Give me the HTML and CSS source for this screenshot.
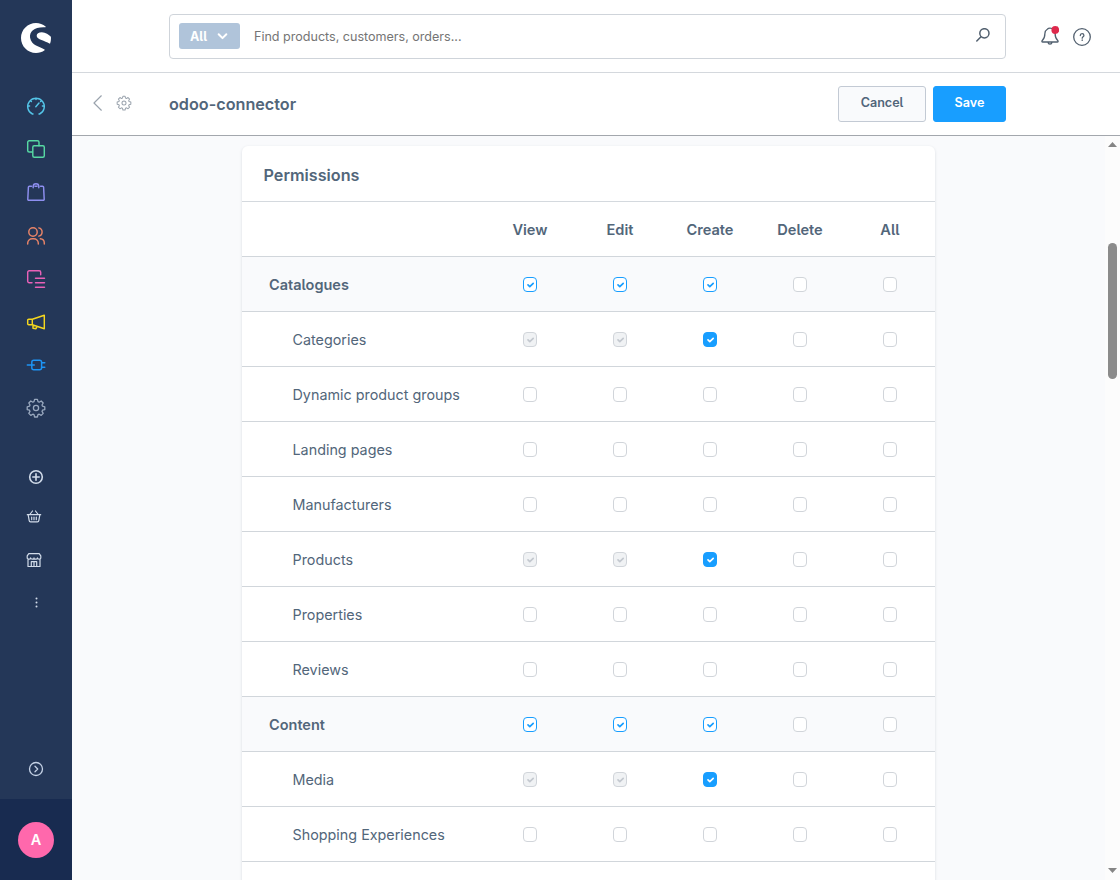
FILE: index.html
```html
<!DOCTYPE html>
<html lang="en">
<head>
<meta charset="utf-8">
<title>odoo-connector</title>
<link rel="stylesheet" href="styles.css">
</head>
<body>
<svg class="defs" width="0" height="0">
  <symbol id="check" viewBox="0 0 12 13"><path d="M4 6.900l1.800 1.700L9.200 5.300"/></symbol>
  <symbol id="gear" viewBox="0 .4 18 18"><path d="M7.600.8h2.800l.6 2.300 1.200.5 2-1.200 2 2-1.200 2 .5 1.200 2.300.6v2.800l-2.300.6-.5 1.200 1.200 2-2 2-2-1.200-1.200.5-.6 2.300H7.600L7 16.100l-1.200-.5-2 1.200-2-2 1.200-2-.5-1.200L.2 11V8.200L2.500 7.600 3 6.400l-1.200-2 2-2 2 1.200L7 3.100z"/><circle cx="9" cy="9.400" r="2.600"/></symbol>
</svg>
<div class="app">
  <aside class="sidebar">
    <svg class="logo" viewBox="0 0 30 30"><path d="M24.600 3.600C21.900 1.300 18.600 0 15 0 6.700 0 0 6.700 0 15s6.700 15 15 15c3.200 0 6.200-1 8.600-2.700.3-.3.200-.6-.1-.8C19 23.800 10.200 22.500 9.100 14.800 8.300 8.300 13.500 3.700 24.200 4.300c.5 0 .7-.4.4-.7z"/><path d="M29.900 13.800c-2-2-5.300-4.500-9.100-4.500-3.300 0-5.200 1.500-5.100 3.600.1 3.800 8.400 4.500 12.700 7.700.3.200.7.100.8-.3.700-2.100.9-4.300.7-6.500z"/></svg>
    <nav class="main-nav">
      <svg class="c-cyan" viewBox="0 0 18 18"><path d="M6 17H5.400A8.300 8.300 0 1 1 12.600 17H12M8.800 9.800L12 6M1 9h1.600M15.400 9H17M9 1v1.500M3.400 3.400l1 1M14.600 3.400l-1 1"/></svg>
      <svg class="c-green" viewBox="0 0 18 18"><path d="M5.300 12H2.200A1.500 1.500 0 0 1 .7 10.500V2.200A1.500 1.500 0 0 1 2.200.7h8.300A1.500 1.500 0 0 1 12 2.200v3.500"/><rect x="5.800" y="5.800" width="11.500" height="11.500" rx="1.500"/></svg>
      <svg class="c-purple" viewBox="0 0 18 18"><path d="M4.500 3.200H2.400a1 1 0 0 0-1 .9L.8 16.200a1 1 0 0 0 1 1.100h14.400a1 1 0 0 0 1-1.100l-.6-12.100a1 1 0 0 0-1-.9h-2.100M8 3.200h2M6.200 4.700V3.500C6.200-.1 11.800-.1 11.800 3.500v1.200"/></svg>
      <svg class="c-orange" viewBox="0 0 18 18"><circle cx="6" cy="5" r="4.200"/><path d="M.7 17v-1a4.500 4.500 0 0 1 4.500-4.200h1.600A4.500 4.500 0 0 1 11.300 16v1M11.800.9a4.200 4.200 0 0 1 0 8.200M13.300 11.800c2.500.2 4 1.800 4 4.200v1"/></svg>
      <svg class="c-pink" viewBox="0 0 18 18"><path d="M5 12.800H2.200A1.500 1.500 0 0 1 .7 11.300V2.200A1.500 1.500 0 0 1 2.200.7h10A1.500 1.500 0 0 1 13.700 2.200v2.500M8.500 8.300h9M8.500 12.800h9M8.500 17.200h9"/></svg>
      <svg class="c-yellow" viewBox="0 0 18 18"><path d="M1.700 6.300h3.600v5.400H1.700a1 1 0 0 1-1-1V7.300a1 1 0 0 1 1-1zM5.300 6.300l12-4v13.400l-12-4M6 12v3.200l3 .5.900-2.400"/></svg>
      <svg class="c-blue" viewBox="0 0 18 18"><rect x="4.800" y="4.200" width="9.800" height="9.600" rx="2"/><path d="M.3 9h7M14.600 6.800h3.200M14.600 11.200h3.200"/></svg>
      <svg class="c-gray" viewBox="0 0 18 18"><use href="#gear"/></svg>
    </nav>
    <nav class="sub-nav">
      <svg class="plus" viewBox="0 0 18 18"><circle cx="9" cy="9" r="6.300"/><path d="M9 5.800v6.400M5.800 9h6.400"/></svg>
      <svg class="shift" viewBox="0 0 18 18"><path d="M2.300 6.700h13.400M3.200 7l1 5.600c.1.800.6 1.200 1.300 1.200h7c.7 0 1.200-.4 1.300-1.200l1-5.600M4.800 6.500L7.500 3M13.200 6.500L10.500 3M6.700 9v2.700M9 9v2.700M11.300 9v2.700"/></svg>
      <svg class="shift" viewBox="0 0 18 18"><path d="M3 8.500v7h12v-7M3.800 2.600h10.400l1.600 2.300v2c0 1.700-3.400 1.700-3.400 0 0 1.700-3.400 1.700-3.400 0 0 1.700-3.400 1.700-3.400 0 0 1.700-3.400 1.700-3.400 0v-2zM6.300 15.500v-4.800h5.400v4.800M9 10.700v4.800"/></svg>
      <svg class="dots" viewBox="0 0 18 18"><circle cx="9.500" cy="4.600" r="1"/><circle cx="9.500" cy="8.500" r="1"/><circle cx="9.500" cy="12.400" r="1"/></svg>
    </nav>
    <svg class="expand" viewBox="0 0 18 18"><circle cx="9" cy="9" r="6.500"/><path d="M8 6.300L10.700 9 8 11.700"/></svg>
    <div class="user"><span class="avatar">A</span></div>
  </aside>
  <div class="page">
    <header class="topbar">
      <div class="search">
        <button class="scope">All <svg viewBox="0 0 10 8"><path d="M1.500 2l3.500 3.500L8.500 2"/></svg></button>
        <span class="placeholder">Find products, customers, orders...</span>
        <svg class="lens" viewBox="0 0 14 14"><circle cx="8.400" cy="5.300" r="4.600"/><path d="M5 8.700L.8 13"/></svg>
      </div>
      <div class="actions">
        <svg class="bell" viewBox="0 0 18 20"><path d="M6.300 3.200C4.600 4.200 3.900 5.500 3.900 7.500c0 3.500-.5 5-2.600 7-.7.700-.5 1.500.4 1.500h14.600c.9 0 1.100-.8.400-1.500-2.100-2-2.600-3.500-2.600-7 0-3-2.100-5.300-5.100-5.300-1 0-2 .3-2.700 1zM7 16.300c.3 2.300 3.700 2.300 4 0"/><circle class="alert" cx="14.300" cy="4" r="3.900"/></svg>
        <svg class="help" viewBox="0 0 18 18"><circle cx="9" cy="9" r="8.300"/><path d="M7.300 7.500C7.300 5 10.900 5.100 10.900 7.400 10.900 8.800 9.200 8.800 9.200 10.200M9.200 12v.4"/></svg>
      </div>
    </header>
    <header class="smartbar">
      <svg class="back" viewBox="0 0 9 16"><path d="M8.300.800L1 8l7.300 7.200"/></svg>
      <svg class="cog" viewBox="0 0 18 18"><use href="#gear"/></svg>
      <h1>odoo-connector</h1>
      <button class="btn cancel">Cancel</button>
      <button class="btn save">Save</button>
    </header>
    <main class="content">
      <section class="card">
        <h2>Permissions</h2>
        <div class="row head"><span></span><b>View</b><b>Edit</b><b>Create</b><b>Delete</b><b>All</b></div>
        <div class="row group"><span>Catalogues</span><svg class="cb some"><use href="#check"/></svg><svg class="cb some"><use href="#check"/></svg><svg class="cb some"><use href="#check"/></svg><svg class="cb"></svg><svg class="cb"></svg></div>
        <div class="row"><span>Categories</span><svg class="cb locked"><use href="#check"/></svg><svg class="cb locked"><use href="#check"/></svg><svg class="cb on"><use href="#check"/></svg><svg class="cb"></svg><svg class="cb"></svg></div>
        <div class="row"><span>Dynamic product groups</span><svg class="cb"></svg><svg class="cb"></svg><svg class="cb"></svg><svg class="cb"></svg><svg class="cb"></svg></div>
        <div class="row"><span>Landing pages</span><svg class="cb"></svg><svg class="cb"></svg><svg class="cb"></svg><svg class="cb"></svg><svg class="cb"></svg></div>
        <div class="row"><span>Manufacturers</span><svg class="cb"></svg><svg class="cb"></svg><svg class="cb"></svg><svg class="cb"></svg><svg class="cb"></svg></div>
        <div class="row"><span>Products</span><svg class="cb locked"><use href="#check"/></svg><svg class="cb locked"><use href="#check"/></svg><svg class="cb on"><use href="#check"/></svg><svg class="cb"></svg><svg class="cb"></svg></div>
        <div class="row"><span>Properties</span><svg class="cb"></svg><svg class="cb"></svg><svg class="cb"></svg><svg class="cb"></svg><svg class="cb"></svg></div>
        <div class="row"><span>Reviews</span><svg class="cb"></svg><svg class="cb"></svg><svg class="cb"></svg><svg class="cb"></svg><svg class="cb"></svg></div>
        <div class="row group"><span>Content</span><svg class="cb some"><use href="#check"/></svg><svg class="cb some"><use href="#check"/></svg><svg class="cb some"><use href="#check"/></svg><svg class="cb"></svg><svg class="cb"></svg></div>
        <div class="row"><span>Media</span><svg class="cb locked"><use href="#check"/></svg><svg class="cb locked"><use href="#check"/></svg><svg class="cb on"><use href="#check"/></svg><svg class="cb"></svg><svg class="cb"></svg></div>
        <div class="row"><span>Shopping Experiences</span><svg class="cb"></svg><svg class="cb"></svg><svg class="cb"></svg><svg class="cb"></svg><svg class="cb"></svg></div>
        <div class="row"></div>
      </section>
      <div class="scrollbar"><i class="arrow up"></i><i class="thumb"></i><i class="arrow down"></i></div>
    </main>
  </div>
</div>
</body>
</html>
```
FILE: styles.css
```css
* { box-sizing: border-box; }
body { margin: 0; font-family: Inter, "Liberation Sans", sans-serif; font-feature-settings: "cv05" 1; color: #52667a; }
svg { display: block; fill: none; stroke: currentColor; stroke-width: 1.3; stroke-linecap: round; stroke-linejoin: round; flex: none; }
symbol { overflow: visible; }
.defs { position: absolute; }
button { font-family: inherit; font-feature-settings: inherit; }
.app { display: flex; height: 880px; overflow: hidden; }

.sidebar { width: 72px; flex: none; background: #243758; display: flex; flex-direction: column; align-items: center; padding-top: 23px; }
.logo { width: 30px; height: 30px; fill: #fff; stroke: none; }
.main-nav { display: flex; flex-direction: column; gap: 25.200px; margin-top: 44px; }
.main-nav svg { width: 18px; height: 18px; stroke-width: 1.450; overflow: visible; }
.c-cyan { color: #54c5e8; }
.c-green { color: #57d9a3; }
.c-purple { color: #8e8ff0; }
.c-orange { color: #e88468; }
.c-pink { color: #e861b8; }
.c-yellow { color: #f5d71e; }
.c-blue { color: #1d94f5; }
.c-gray { color: #9aa9bf; }
.main-nav .c-gray { stroke-width: 1.300; }
.sub-nav { display: flex; flex-direction: column; color: #d2dcea; margin-top: 50.600px; }
.sub-nav svg { width: 18px; height: 18px; stroke-width: 1.200; }
.sub-nav .plus { stroke-width: 1.600; margin-bottom: 22px; }
.sub-nav .shift { margin: 0 0 25px -2px; }
.sub-nav .dots { fill: currentColor; stroke: none; }
.expand { width: 18px; height: 18px; color: #c5d2e6; margin-top: auto; margin-bottom: 21px; }
.user { width: 72px; height: 81px; background: #182b50; display: flex; align-items: center; justify-content: center; }
.avatar { width: 36px; height: 36px; border-radius: 50%; background: #ff68ac; color: #fff; font-size: 14.500px; font-weight: 600; line-height: 36px; text-align: center; }

.page { flex: 1; min-width: 0; display: flex; flex-direction: column; background: #fff; }
.topbar { height: 73px; flex: none; border-bottom: 1px solid #d4d8dd; display: flex; align-items: center; padding-left: 97px; }
.search { width: 837px; height: 45px; border: 1px solid #cfd4da; border-radius: 4px; display: flex; align-items: center; padding: 0 15px 0 9px; }
.scope { width: 61px; height: 26px; margin-bottom: 1px; border: 0; border-radius: 3px; background: #b0c4da; color: #fff; font-size: 12.500px; font-weight: 650; display: flex; align-items: center; justify-content: space-between; padding: 2px 12px 0 11px; }
.scope svg { width: 11px; height: 9px; stroke-width: 1.800; }
.placeholder { flex: 1; font-size: 12.560px; line-height: 20px; color: #757575; margin: 1px 0 0 14px; }
.lens { width: 14px; height: 14px; color: #52606f; stroke-width: 1.500; margin-bottom: 3px; }
.actions { display: flex; align-items: center; gap: 14px; margin-left: 35px; color: #52606f; }
.bell { width: 18px; height: 20px; }
.help { width: 18px; height: 18px; margin-top: 2px; }
.alert { fill: #de294c; stroke: none; }

.smartbar { height: 63px; flex: none; border-bottom: 1px solid #a3a7ad; display: flex; align-items: center; padding-left: 21px; }
.back { width: 9px; height: 16px; color: #9aa3ad; stroke-width: 1.200; margin-bottom: 2px; }
.cog { width: 14px; height: 14px; color: #9aa3ad; margin: 0 0 2px 15px; overflow: visible; }
h1 { width: 669px; margin: 0 0 0 38px; font-size: 16.200px; line-height: 24px; font-weight: 600; }
.btn { height: 36px; border-radius: 3px; border: 1px solid #c3cad4; font-size: 12.600px; font-weight: 620; padding: 0 0 4px; }
.cancel { width: 88px; background: #f9fafc; color: #52667a; }
.save { width: 73px; margin-left: 7px; background: #189eff; border-color: #189eff; color: #fff; }

.content { flex: 1; min-height: 0; display: flex; overflow: hidden; background: #f9fafc; }
.card { width: 693px; flex: none; margin: 10px 0 0 170px; align-self: flex-start; background: #fff; border-radius: 6px 6px 0 0; box-shadow: 0 1px 3px rgba(70, 85, 105, .18); }
h2 { height: 56px; margin: 0; padding: 1px 0 0 21.500px; border-bottom: 1px solid #d4d9de; font-size: 16.200px; line-height: 56px; font-weight: 600; }
.row { height: 55px; display: grid; grid-template-columns: 243px repeat(5, 90px); align-items: center; justify-items: center; border-bottom: 1px solid #d1d6db; font-size: 14.350px; line-height: 18px; }
.row span { justify-self: start; padding: 1px 0 0 50.500px; white-space: nowrap; }
.row b { font-weight: 620; font-size: 14.600px; padding-top: 1px; }
.group { background: #f9fafc; font-size: 14.500px; font-weight: 620; }
.group span { padding-left: 27px; }
.cb { width: 14px; height: 15px; border: 1px solid #d1d5da; border-radius: 4px; background: #fff; stroke-width: 1.700; margin-top: 1px; }
.some { border-color: #189eff; color: #189eff; }
.locked { background: #f0f2f4; color: #c3c8cf; }
.on { background: #189eff; border-color: #189eff; color: #fff; }

.scrollbar { width: 15px; margin-left: auto; background: #fcfcfc; display: flex; flex-direction: column; align-items: center; padding: 6px 0 7px; }
.arrow { width: 9px; height: 5px; background: #858585; }
.up { clip-path: polygon(50% 0, 100% 100%, 0 100%); }
.down { clip-path: polygon(0 0, 100% 0, 50% 100%); margin-top: auto; }
.thumb { width: 9px; height: 136px; margin-top: 96px; border-radius: 5px; background: #8b8b8b; }
```
